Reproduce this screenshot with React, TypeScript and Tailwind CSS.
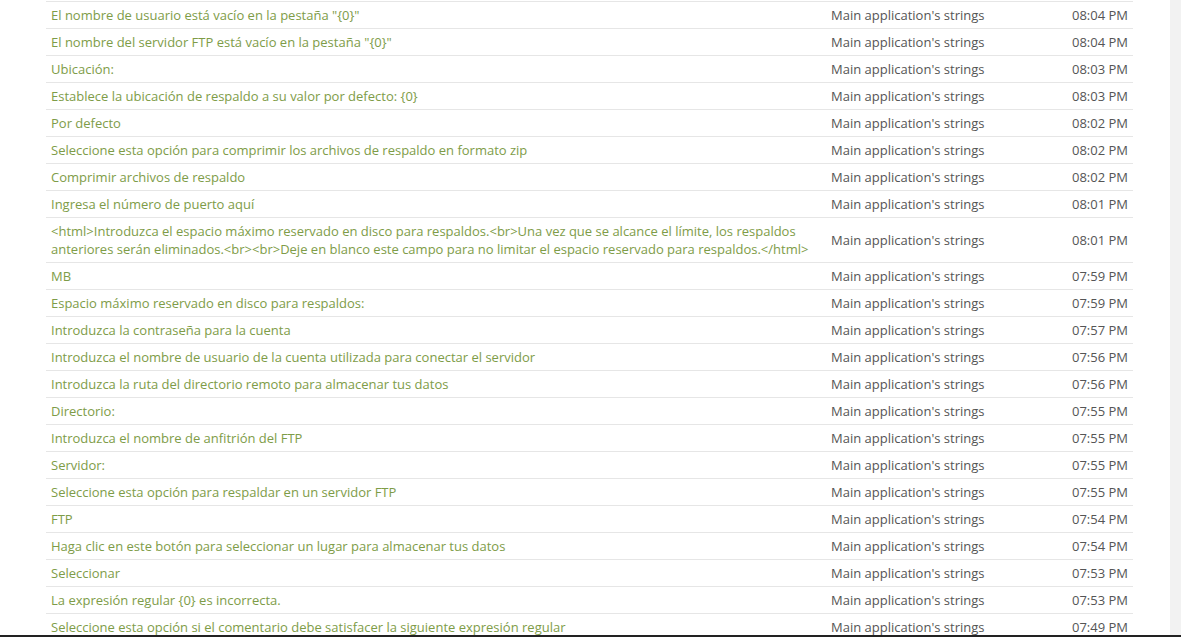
import React from 'react';

type Row = { text: string; time: string };

const ROWS: Row[] = [
  { text: 'El nombre de usuario está vacío en la pestaña "{0}"', time: '08:04 PM' },
  { text: 'El nombre del servidor FTP está vacío en la pestaña "{0}"', time: '08:04 PM' },
  { text: 'Ubicación:', time: '08:03 PM' },
  { text: 'Establece la ubicación de respaldo a su valor por defecto: {0}', time: '08:03 PM' },
  { text: 'Por defecto', time: '08:02 PM' },
  { text: 'Seleccione esta opción para comprimir los archivos de respaldo en formato zip', time: '08:02 PM' },
  { text: 'Comprimir archivos de respaldo', time: '08:02 PM' },
  { text: 'Ingresa el número de puerto aquí', time: '08:01 PM' },
  {
    text: '<html>Introduzca el espacio máximo reservado en disco para respaldos.<br>Una vez que se alcance el límite, los respaldos anteriores serán eliminados.<br><br>Deje en blanco este campo para no limitar el espacio reservado para respaldos.</html>',
    time: '08:01 PM',
  },
  { text: 'MB', time: '07:59 PM' },
  { text: 'Espacio máximo reservado en disco para respaldos:', time: '07:59 PM' },
  { text: 'Introduzca la contraseña para la cuenta', time: '07:57 PM' },
  { text: 'Introduzca el nombre de usuario de la cuenta utilizada para conectar el servidor', time: '07:56 PM' },
  { text: 'Introduzca la ruta del directorio remoto para almacenar tus datos', time: '07:56 PM' },
  { text: 'Directorio:', time: '07:55 PM' },
  { text: 'Introduzca el nombre de anfitrión del FTP', time: '07:55 PM' },
  { text: 'Servidor:', time: '07:55 PM' },
  { text: 'Seleccione esta opción para respaldar en un servidor FTP', time: '07:55 PM' },
  { text: 'FTP', time: '07:54 PM' },
  { text: 'Haga clic en este botón para seleccionar un lugar para almacenar tus datos', time: '07:54 PM' },
  { text: 'Seleccionar', time: '07:53 PM' },
  { text: 'La expresión regular {0} es incorrecta.', time: '07:53 PM' },
  { text: 'Seleccione esta opción si el comentario debe satisfacer la siguiente expresión regular', time: '07:49 PM' },
];

const App: React.FC = () => {
  return (
    <div className="h-[637px] w-[1181px] overflow-hidden flex flex-col bg-white font-['Open_Sans',sans-serif] text-[13px] leading-[18px]">
      <div className="flex-1 flex min-h-0">
        <div className="flex-1 overflow-hidden pl-[46px] pr-[37px] pt-[1px]">
          <table className="w-full border-collapse">
            <colgroup>
              <col />
              <col className="w-[201px]" />
              <col className="w-[106px]" />
            </colgroup>
            <tbody>
              {ROWS.map((row, i) => (
                <tr key={i} className="border-t border-[#e6e6e6]">
                  <td className="px-[5px] py-[4px] align-middle text-[#7e9c48]">
                    <a href="#" className="hover:underline">{row.text}</a>
                  </td>
                  <td className="px-[5px] py-[4px] align-middle text-[#555555] whitespace-nowrap">
                    Main application's strings
                  </td>
                  <td className="px-[5px] py-[4px] align-middle text-right text-[#555555] whitespace-nowrap">
                    {row.time}
                  </td>
                </tr>
              ))}
            </tbody>
          </table>
        </div>
        <div className="w-[11px] bg-[#f2f2f2]" />
      </div>
      <div className="h-[2px] bg-[#222222]" />
    </div>
  );
};

export default App;
